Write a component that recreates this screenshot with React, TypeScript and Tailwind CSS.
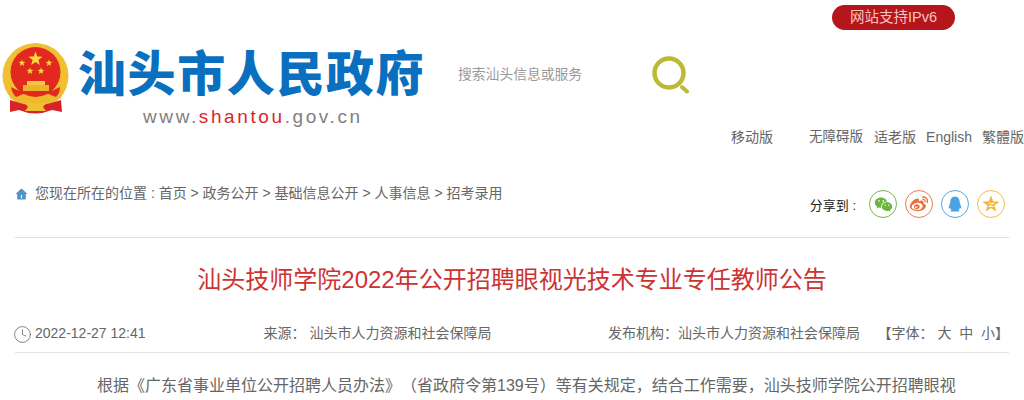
import { Clock } from "lucide-react"
import { RiHome4Fill, RiWechatFill, RiWeiboFill, RiQqFill } from "react-icons/ri"

const cjk = "font-['Liberation_Sans','Noto_Sans_CJK_SC',sans-serif]"

const starPoints = (cx: number, cy: number, r: number) =>
  Array.from({ length: 10 }, (_, i) => {
    const a = (Math.PI / 5) * i - Math.PI / 2
    const d = i % 2 === 0 ? r : r * 0.4
    return `${cx + d * Math.cos(a)},${cy + d * Math.sin(a)}`
  }).join(" ")

const QZone = () => (
  <svg viewBox="0 0 20 20" className="h-[16px] w-[16px]">
    <polygon points={starPoints(10, 10.5, 10)} fill="#f7b233" strokeLinejoin="round" stroke="#f7b233" strokeWidth="1" />
    <path d="M6.5 9 H13.5 L7.5 13 H14" fill="none" stroke="#fdf0cf" strokeWidth="1.3" />
  </svg>
)

const shares = [
  { border: "border-[#7ab648]", color: "text-[#6cb33f]", icon: <RiWechatFill className="h-[19px] w-[19px]" /> },
  { border: "border-[#ee7a50]", color: "text-[#ea6f3f]", icon: <RiWeiboFill className="h-[20px] w-[20px]" /> },
  { border: "border-[#56a8e0]", color: "text-[#4ba3e3]", icon: <RiQqFill className="h-[18px] w-[18px]" /> },
  { border: "border-[#f5b94a]", color: "text-[#f7b233]", icon: <QZone /> },
]

function Emblem() {
  return (
    <svg viewBox="0 0 67 72" className="h-[72px] w-[67px] shrink-0">
      <circle cx="33.5" cy="33" r="33" fill="#f0c030" />
      <circle cx="33.5" cy="29" r="25" fill="#e3291f" />
      <polygon points={starPoints(33.5, 16, 7.5)} fill="#fbd93c" />
      <polygon points={starPoints(20, 20, 3.6)} fill="#fbd93c" />
      <polygon points={starPoints(47, 20, 3.6)} fill="#fbd93c" />
      <polygon points={starPoints(28, 28, 3.6)} fill="#fbd93c" />
      <polygon points={starPoints(39, 28, 3.6)} fill="#fbd93c" />
      <rect x="25" y="38" width="18" height="4" fill="#f3c63b" />
      <rect x="21" y="42" width="26" height="6" fill="#e9b52c" />
      <path d="M6 46 Q33 62 61 46 L59 55 Q33 68 8 55 Z" fill="#efb92e" />
      <path d="M9 44 Q10 50 14 54 L24 50 Q33 53 44 50 L54 54 Q58 50 58 44 Q33 58 9 44 Z" fill="#e3291f" />
      <path d="M8 57 L18 60 Q33 65 49 60 L59 57 L60 69 L50 67 Q33 74 17 67 L8 69 Z" fill="#d8222a" />
      <path d="M23 60 H44 L41 64 L44 68 H23 L26 64 Z" fill="#f0c030" />
    </svg>
  )
}

export default function App() {
  return (
    <div className={`h-[400px] w-[1024px] overflow-hidden bg-white [text-spacing-trim:space-all] ${cjk}`}>
      {/* Header */}
      <header className="relative h-[160px]">
        <div className="flex justify-end pr-[69px] pt-[5px]">
          <a className="flex h-[25px] w-[123px] items-center justify-center rounded-full bg-[#b5161b] text-[14.5px] text-[#f7c4c4]">
            网站支持IPv6
          </a>
        </div>
        <div className="mt-[13px] flex items-start pl-[2px]">
          <Emblem />
          <div className="ml-[9px] mt-[2px] w-[350px]">
            <div className="whitespace-nowrap text-[48px] font-black leading-[60px] tracking-[1.6px] text-[#0a6fbe]">
              汕头市人民政府
            </div>
            <div className="ml-[65px] mt-[2px] whitespace-nowrap text-[19px] leading-[20px] tracking-[2.6px] text-[#808080]">
              www.<span className="text-[#d8262b]">shantou</span>.gov.cn
            </div>
          </div>
          <div className="ml-[30px] mt-[22px] w-[194px] text-[13.8px] leading-[20px] text-[#999999]">搜索汕头信息或服务</div>
          <svg viewBox="0 0 38 38" className="mt-[13px] h-[38px] w-[38px]">
            <circle cx="17" cy="17" r="14.5" fill="none" stroke="#bcb935" strokeWidth="4.5" />
            <line x1="30" y1="31" x2="35" y2="35.5" stroke="#bcb935" strokeWidth="4" strokeLinecap="round" />
          </svg>
        </div>
        <nav className="flex justify-end text-[14px] leading-[20px] text-[#666666]">
          <a className="mr-[36px]">移动版</a>
          <a className="mr-[11px] text-[13.5px]">无障碍版</a>
          <a className="mr-[10px]">适老版</a>
          <a className="mr-[10px]">English</a>
          <a>繁體版</a>
        </nav>
      </header>

      {/* Breadcrumb and share */}
      <div className="mx-[15px] flex h-[78px] w-[994px] justify-between border-b border-[#dddddd]">
        <div className="flex items-start pt-[24px] text-[14px] leading-[18px] text-[#666666]">
          <RiHome4Fill className="mr-[7px] mt-[4px] h-[13px] w-[13px] text-[#4e94c4]" />
          <span className="whitespace-pre">您现在所在的位置 : 首页 &gt; 政务公开 &gt; 基础信息公开 &gt; 人事信息 &gt; 招考录用</span>
        </div>
        <div className="flex items-start pr-[4px] pt-[30px]">
          <span className="mr-[13px] mt-[7px] whitespace-pre text-[13px] leading-[18px] text-[#222222]">分享到 :</span>
          <div className="flex gap-[8px]">
            {shares.map((s, i) => (
              <span key={i} className={`flex h-[28px] w-[28px] items-center justify-center rounded-full border ${s.border} ${s.color}`}>
                {s.icon}
              </span>
            ))}
          </div>
        </div>
      </div>

      {/* Title */}
      <h1 className="mt-[25px] text-center text-[24px] font-normal leading-[34px] text-[#cc3333]">
        汕头技师学院2022年公开招聘眼视光技术专业专任教师公告
      </h1>

      {/* Meta row */}
      <div className="mx-[15px] mt-[27px] flex h-[29px] w-[994px] border-b border-[#e5e5e5] text-[14px] leading-[18px] text-[#666666]">
        <div className="flex w-[249px] items-start">
          <Clock className="ml-[-2px] mr-[3px] mt-[1px] h-[19px] w-[19px]" strokeWidth={1} />
          <span>2022-12-27 12:41</span>
        </div>
        <div className="w-[345px] whitespace-pre">来源： 汕头市人力资源和社会保障局</div>
        <div className="w-[270px] whitespace-pre">发布机构：汕头市人力资源和社会保障局</div>
        <div className="whitespace-pre">【字体： 大  中  小】</div>
      </div>

      {/* Article */}
      <p className="mt-[21px] whitespace-nowrap pl-[97px] text-[16px] leading-[24px] text-[#666666]">
        根据《广东省事业单位公开招聘人员办法》（省政府令第139号）等有关规定，结合工作需要，汕头技师学院公开招聘眼视
      </p>
    </div>
  )
}
